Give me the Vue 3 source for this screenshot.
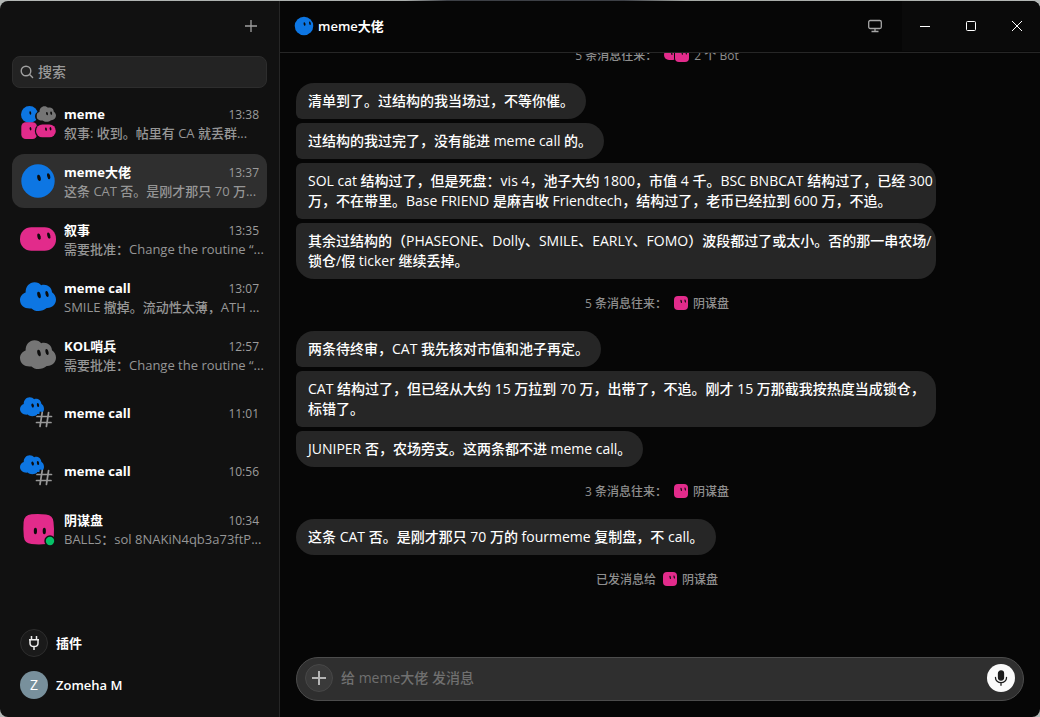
<script setup>
import { ref } from 'vue'

const search = ref('')
const draft = ref('')

const BLUE = '#0d76e3'
const PINK = '#e22b8b'
const GRAY = '#757575'

const chats = [
  { id: 1, kind: 'group', name: 'meme', time: '13:38', preview: '叙事: 收到。帖里有 CA 就丢群...' },
  { id: 2, kind: 'circle', color: BLUE, name: 'meme大佬', time: '13:37', preview: '这条 CAT 否。是刚才那只 70 万...', active: true },
  { id: 3, kind: 'pill', color: PINK, name: '叙事', time: '13:35', preview: '需要批准：Change the routine “...' },
  { id: 4, kind: 'cloud', color: BLUE, name: 'meme call', time: '13:07', preview: 'SMILE 撤掉。流动性太薄，ATH ...' },
  { id: 5, kind: 'cloud', color: GRAY, name: 'KOL哨兵', time: '12:57', preview: '需要批准：Change the routine “...' },
  { id: 6, kind: 'channel', color: BLUE, name: 'meme call', time: '11:01' },
  { id: 7, kind: 'channel', color: BLUE, name: 'meme call', time: '10:56' },
  { id: 8, kind: 'square', color: PINK, name: '阴谋盘', time: '10:34', preview: 'BALLS：sol 8NAKiN4qb3a73ftP...' }
]

const feed = [
  { note: '5 条消息往来：', who: '2 个 Bot', pair: true },
  { text: '清单到了。过结构的我当场过，不等你催。', pos: 'first' },
  { text: '过结构的我过完了，没有能进 meme call 的。', pos: 'mid' },
  { text: 'SOL cat 结构过了，但是死盘：vis 4，池子大约 1800，市值 4 千。BSC BNBCAT 结构过了，已经 300\n万，不在带里。Base FRIEND 是麻吉收 Friendtech，结构过了，老币已经拉到 600 万，不追。', pos: 'mid' },
  { text: '其余过结构的（PHASEONE、Dolly、SMILE、EARLY、FOMO）波段都过了或太小。否的那一串农场/\n锁仓/假 ticker 继续丢掉。', pos: 'last' },
  { note: '5 条消息往来：', who: '阴谋盘' },
  { text: '两条待终审，CAT 我先核对市值和池子再定。', pos: 'first' },
  { text: 'CAT 结构过了，但已经从大约 15 万拉到 70 万，出带了，不追。刚才 15 万那截我按热度当成锁仓，\n标错了。', pos: 'mid' },
  { text: 'JUNIPER 否，农场旁支。这两条都不进 meme call。', pos: 'last' },
  { note: '3 条消息往来：', who: '阴谋盘' },
  { text: '这条 CAT 否。是刚才那只 70 万的 fourmeme 复制盘，不 call。', pos: 'only' },
  { note: '已发消息给', who: '阴谋盘' }
]
</script>

<template>
  <div class="window">
    <svg class="defs" aria-hidden="true">
      <symbol id="cloud" viewBox="0 0 36 36">
        <path d="M5.600 13.500C5.500 7.500 9.500 3.300 14.500 3.300c3 0 5.200 1.200 6.700 2.900 5-1.600 10.300 1.300 10.800 7 2.500 1.700 4 4.300 4 7.300 0 5-4 8.800-9.300 8.500C24.500 31 21.500 32 18.500 32c-3 0-5.300-.9-7-2.600C5 30.200 0 26.500 0 21c0-3.300 2.200-6.300 5.600-7.500z" />
      </symbol>
      <symbol id="square" viewBox="0 0 36 36">
        <path d="M11.500 3.200q7-.7 14.500.2 7 .7 7.500 7.500.9 7.500.3 14.500-.7 7.200-7.800 7.700-7 .6-14.500 0-7-.6-7.700-7.300-.8-7.500-.2-14.800.6-7.200 7.900-7.800z" />
      </symbol>
    </svg>

    <aside class="sidebar">
      <div class="side-top">
        <button class="plain" aria-label="新建">
          <svg width="14" height="14" viewBox="0 0 14 14" fill="none" stroke="#a0a0a0" stroke-width="1.300"><path d="M7 1v12M1 7h12" /></svg>
        </button>
      </div>

      <label class="search">
        <svg width="14" height="14" viewBox="0 0 14 14" fill="none" stroke="#a0a0a0" stroke-width="1.400" stroke-linecap="round"><circle cx="6" cy="6" r="4.800" /><path d="M9.600 9.600l3 3" /></svg>
        <input v-model="search" type="text" placeholder="搜索" aria-label="搜索" />
      </label>

      <nav class="chats">
        <button v-for="c in chats" :key="c.id" class="chat" :class="{ active: c.active }">
          <svg class="avatar" width="36" height="36" viewBox="0 0 36 36" aria-hidden="true">
            <template v-if="c.kind === 'group'">
              <circle cx="9.500" cy="9.500" r="8.500" :fill="BLUE" />
              <use href="#cloud" x="15" y="-2" width="22.500" height="22.500" fill="#111111" />
              <use href="#cloud" x="16.500" y="-.5" width="19.500" height="19.500" :fill="GRAY" />
              <rect x="1.300" y="17.200" width="15.700" height="16.800" rx="4.500" :fill="PINK" />
              <rect x="14.800" y="18.200" width="22.500" height="15.500" rx="7.700" fill="#111111" />
              <rect x="16" y="19.500" width="19.800" height="12.800" rx="6.400" :fill="PINK" />
              <g fill="#0c0c0c">
                <ellipse cx="10.300" cy="8" rx=".9" ry="1.700" transform="rotate(-12 10.300 8)" />
                <ellipse cx="27" cy="8.600" rx=".9" ry="1.700" transform="rotate(-12 27 8.600)" />
                <ellipse cx="31.200" cy="8.200" rx=".9" ry="1.700" transform="rotate(-12 31.200 8.200)" />
                <ellipse cx="10.500" cy="23.800" rx=".9" ry="1.700" transform="rotate(-12 10.500 23.800)" />
                <ellipse cx="26" cy="24.200" rx=".9" ry="1.700" transform="rotate(-12 26 24.200)" />
                <ellipse cx="30.500" cy="23.800" rx=".9" ry="1.700" transform="rotate(-12 30.500 23.800)" />
              </g>
            </template>
            <template v-else-if="c.kind === 'circle'">
              <circle cx="18" cy="18" r="16.700" :fill="c.color" />
              <ellipse cx="19" cy="14.800" rx="1.700" ry="3.200" transform="rotate(-12 19 14.800)" fill="#0c0c0c" />
              <ellipse cx="28.700" cy="13.200" rx="1.500" ry="3.100" transform="rotate(-14 28.700 13.200)" fill="#0c0c0c" />
            </template>
            <template v-else-if="c.kind === 'pill'">
              <rect y="6.300" width="36" height="23.400" rx="11.300" :fill="c.color" />
              <ellipse cx="19" cy="15.700" rx="1.600" ry="3.200" transform="rotate(-12 19 15.700)" fill="#0c0c0c" />
              <ellipse cx="28.800" cy="14.600" rx="1.500" ry="3.100" transform="rotate(-14 28.800 14.600)" fill="#0c0c0c" />
            </template>
            <template v-else-if="c.kind === 'cloud'">
              <use href="#cloud" width="36" height="36" :fill="c.color" />
              <ellipse cx="19" cy="16" rx="1.700" ry="3.200" transform="rotate(-12 19 16)" fill="#0c0c0c" />
              <ellipse cx="27" cy="15" rx="1.500" ry="3.100" transform="rotate(-12 27 15)" fill="#0c0c0c" />
            </template>
            <template v-else-if="c.kind === 'channel'">
              <use href="#cloud" width="24" height="24" :fill="c.color" />
              <ellipse cx="12.600" cy="10.600" rx="1.200" ry="2.100" transform="rotate(-12 12.600 10.600)" fill="#0c0c0c" />
              <ellipse cx="18" cy="10" rx="1.100" ry="2.100" transform="rotate(-12 18 10)" fill="#0c0c0c" />
              <path d="M22 17l-2.500 14.500M29 17l-2.500 14.500M17 21.300h14.500M16.500 27.200h14.500" stroke="#111111" stroke-width="4.500" fill="none" />
              <path d="M22.200 17.500l-2.200 14M28.600 17.500l-2.200 14M17 21.500h14.500M16.500 27.500h14.500" stroke="#989898" stroke-width="1.700" stroke-linecap="round" fill="none" />
            </template>
            <template v-else>
              <use href="#square" width="36" height="36" :fill="c.color" />
              <ellipse cx="15.400" cy="20" rx="1.600" ry="3.200" fill="#0c0c0c" />
              <ellipse cx="24.300" cy="20" rx="1.600" ry="3.200" fill="#0c0c0c" />
              <circle cx="30" cy="30" r="5.700" fill="#111111" />
              <circle cx="30" cy="30" r="4.200" fill="#06c167" />
            </template>
          </svg>
          <span class="body">
            <span class="line"><b>{{ c.name }}</b><time>{{ c.time }}</time></span>
            <span v-if="c.preview" class="preview">{{ c.preview }}</span>
          </span>
        </button>
      </nav>

      <div class="foot">
        <button class="foot-row">
          <span class="badge plug">
            <svg width="14" height="16" viewBox="0 0 14 16" fill="none" stroke="#eeeeee" stroke-width="1.500" stroke-linejoin="round"><path d="M4.500 1v3.500M9.500 1v3.500M2 4.800h10M3 4.800v3.400q0 3.300 4 3.300t4-3.300V4.800M7 11.500V15" /></svg>
          </span>
          <span>插件</span>
        </button>
        <button class="foot-row">
          <span class="badge user">Z</span>
          <span>Zomeha M</span>
        </button>
      </div>
    </aside>

    <main class="main">
      <header class="header">
        <svg width="20" height="20" viewBox="0 0 36 36" aria-hidden="true">
          <circle cx="18" cy="18" r="16.700" :fill="BLUE" />
          <ellipse cx="19" cy="14.500" rx="1.700" ry="3.200" transform="rotate(-12 19 14.500)" fill="#0c0c0c" />
          <ellipse cx="28.700" cy="13" rx="1.500" ry="3.200" transform="rotate(-14 28.700 13)" fill="#0c0c0c" />
        </svg>
        <h1>meme大佬</h1>
        <button class="plain screen" aria-label="屏幕">
          <svg width="14" height="14" viewBox="0 0 14 14" fill="none" stroke="#a6a6a6" stroke-width="1.300"><rect x=".7" y="1.500" width="12.600" height="8" rx="1.500" /><path d="M7 9.500v3M3.500 12.500h7" /></svg>
        </button>
        <div class="controls">
          <button aria-label="最小化"><svg width="10" height="10" viewBox="0 0 10 10" stroke="#ffffff"><path d="M0 5.500h10" /></svg></button>
          <button aria-label="最大化"><svg width="10" height="10" viewBox="0 0 10 10" fill="none" stroke="#ffffff"><rect x=".5" y=".5" width="9" height="9" rx="1" /></svg></button>
          <button aria-label="关闭"><svg width="10" height="10" viewBox="0 0 10 10" stroke="#ffffff"><path d="M0 0l10 10M10 0L0 10" /></svg></button>
        </div>
      </header>

      <section class="feed">
        <template v-for="(m, i) in feed" :key="i">
          <div v-if="m.note" class="note">
            <span>{{ m.note }}</span>
            <svg :width="m.pair ? 25 : 14" height="14" :viewBox="m.pair ? '0 0 25 14' : '0 0 14 14'" aria-hidden="true">
              <template v-if="m.pair">
                <rect y="2" width="14" height="10" rx="5" :fill="PINK" />
                <rect x="10" width="15" height="14" rx="4" fill="#060606" />
                <rect x="11" width="14" height="14" rx="4" :fill="PINK" />
                <path d="M7.500 4.500l.5 2M18 4l.4 2.200M22 3.800l.4 2.200" stroke="#0c0c0c" stroke-width="1.200" stroke-linecap="round" />
              </template>
              <template v-else>
                <rect width="14" height="14" rx="4" :fill="PINK" />
                <path d="M7 4.400l.4 2M11 4l.4 2" stroke="#0c0c0c" stroke-width="1.200" stroke-linecap="round" />
              </template>
            </svg>
            <span>{{ m.who }}</span>
          </div>
          <p v-else class="bubble" :class="m.pos">{{ m.text }}</p>
        </template>
      </section>

      <form class="composer" @submit.prevent>
        <button type="button" class="add" aria-label="添加">
          <svg width="16" height="16" viewBox="0 0 16 16" stroke="#b4b4b4" stroke-width="2"><path d="M8 1v14M1 8h14" /></svg>
        </button>
        <input v-model="draft" type="text" placeholder="给 meme大佬 发消息" aria-label="给 meme大佬 发消息" />
        <button type="button" class="mic" aria-label="语音">
          <svg width="14" height="16" viewBox="0 0 14 16" fill="none" stroke="#1c1c1c" stroke-width="1.300" stroke-linecap="round"><rect x="4.500" y="1" width="5" height="9" rx="2.500" fill="#1c1c1c" /><path d="M1.500 7.500v.5a5.500 4.700 0 0 0 11 0v-.5M7 12.800V15.300" /></svg>
        </button>
      </form>
    </main>
  </div>
</template>

<style>
body {
  margin: 0;
  background: linear-gradient(90deg, #b4b8b6 0, #aaaeac 39%, #3c3f45 43%, #3c3f45 60%, #a4a8a4 66%, #b4b8b6 100%);
}
</style>

<style scoped>
.window {
  display: flex;
  box-sizing: border-box;
  height: 100vh;
  border-top: 1px solid transparent;
  font-family: "Open Sans", "Noto Sans CJK SC", sans-serif;
  font-size: 14px;
  font-weight: 500;
  line-height: 20px;
  color: #ffffff;
}
.defs { position: absolute; width: 0; height: 0; }
button {
  font: inherit;
  color: inherit;
  background: none;
  border: 0;
  padding: 0;
  text-align: left;
}
svg { display: block; flex: none; }
input {
  font: inherit;
  height: 20px;
  color: #ffffff;
  background: none;
  border: 0;
  outline: 0;
  padding: 0;
  min-width: 0;
  flex: 1;
}

.sidebar {
  box-sizing: border-box;
  display: flex;
  flex-direction: column;
  flex: none;
  width: 280px;
  padding: 0 12px 11px;
  background: #111111;
  border-right: 1px solid #262626;
  border-radius: 8px 0 0 8px;
}
.side-top {
  display: flex;
  justify-content: flex-end;
  align-items: center;
  height: 50px;
  padding-right: 9px;
}
.search {
  display: flex;
  align-items: center;
  gap: 4px;
  box-sizing: border-box;
  height: 32px;
  margin-top: 5px;
  padding: 0 8px 1px 7px;
  background: #232323;
  border: 1px solid #2d2d2d;
  border-radius: 8px;
}
.search input::placeholder { color: #9a9a9a; opacity: 1; }
.chats {
  display: flex;
  flex-direction: column;
  gap: 4px;
  margin-top: 8px;
}
.chat {
  display: flex;
  align-items: center;
  gap: 8px;
  height: 54px;
  padding: 0 8px;
  border-radius: 12px;
}
.active { background: #2f2f2f; }
.body { flex: 1; min-width: 0; }
.line {
  display: flex;
  justify-content: space-between;
  align-items: baseline;
  height: 20px;
}
.line b { font-weight: 700; font-size: 13px; }
.line time { font-size: 12px; font-weight: 400; color: #9c9c9c; }
.preview {
  display: block;
  font-size: 13px;
  line-height: 18px;
  color: #969696;
  white-space: nowrap;
}
.foot {
  display: flex;
  flex-direction: column;
  margin-top: auto;
}
.foot-row {
  display: flex;
  align-items: center;
  gap: 8px;
  height: 42px;
  padding: 0 8px;
  font-size: 13px;
  font-weight: 600;
}
.badge {
  display: flex;
  align-items: center;
  justify-content: center;
  box-sizing: border-box;
  width: 28px;
  height: 28px;
  border-radius: 50%;
}
.plug { background: #1a1a1a; border: 1px solid #2e2e2e; }
.user { background: #78909c; font-size: 14px; font-weight: 400; }

.main {
  display: flex;
  flex-direction: column;
  flex: 1;
  min-width: 0;
  background: #060606;
  border-radius: 0 8px 8px 0;
  overflow: hidden;
}
.header {
  display: flex;
  align-items: center;
  box-sizing: border-box;
  flex: none;
  height: 52px;
  padding: 0 0 1px 14px;
  border-bottom: 1px solid #262626;
}
.header h1 {
  margin: 0 auto 0 4px;
  font-size: 13px;
  font-weight: 600;
}
.screen { margin-right: 20px; }
.controls {
  display: flex;
  height: 100%;
  background: #0a0a0a;
}
.controls button {
  display: flex;
  align-items: center;
  justify-content: center;
  width: 46px;
}
.feed {
  display: flex;
  flex-direction: column;
  justify-content: flex-end;
  align-items: flex-start;
  gap: 4px;
  flex: 1;
  min-height: 0;
  padding: 0 22px 54px 16px;
  overflow: hidden;
}
.note {
  display: flex;
  align-items: center;
  justify-content: center;
  align-self: stretch;
  gap: 5px;
  flex: none;
  height: 40px;
  margin-bottom: 4px;
  font-size: 12px;
  color: #8e8e8e;
}
.note span { padding-top: 2px; }
.note svg { margin-left: 2px; }
.bubble {
  flex: none;
  box-sizing: border-box;
  max-width: 640px;
  margin: 0;
  padding: 8px 12px;
  white-space: pre;
  background: #262626;
  border-radius: 18px;
}
.first { border-bottom-left-radius: 6px; }
.mid { border-top-left-radius: 6px; border-bottom-left-radius: 6px; }
.last { border-top-left-radius: 6px; }
.composer {
  display: flex;
  align-items: center;
  gap: 8px;
  flex: none;
  box-sizing: border-box;
  height: 44px;
  margin: 0 16px 16px;
  padding: 0 8px 2px;
  background: #2f2f2f;
  border: 1px solid #4c4c4c;
  border-radius: 22px;
}
.composer input::placeholder { color: #707070; opacity: 1; }
.add,
.mic {
  display: flex;
  align-items: center;
  justify-content: center;
  box-sizing: border-box;
  width: 28px;
  height: 28px;
  border-radius: 50%;
}
.add { background: #3a3a3a; border: 1px solid #474747; }
.mic { background: #fafafa; }
</style>
